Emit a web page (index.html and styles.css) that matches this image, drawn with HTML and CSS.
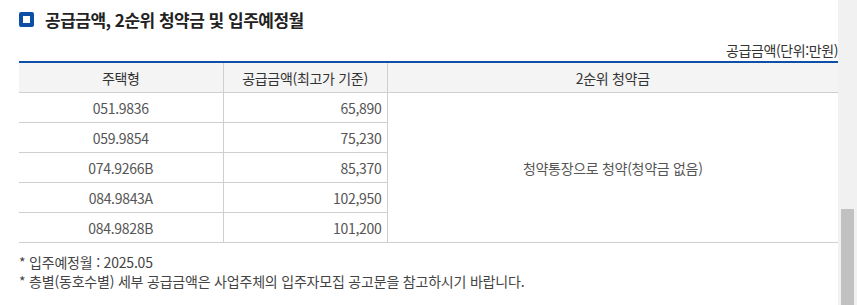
FILE: index.html
```html
<!DOCTYPE html>
<html lang="ko">
<head>
<meta charset="utf-8">
<link rel="stylesheet" href="styles.css">
</head>
<body>
<div class="frame">
  <main class="content">
    <h3 class="title"><span class="bullet"></span>공급금액, 2순위 청약금 및 입주예정월</h3>
    <p class="unit">공급금액(단위:만원)</p>
    <table class="supply">
      <colgroup>
        <col class="c1"><col class="c2"><col class="c3">
      </colgroup>
      <thead>
        <tr><th>주택형</th><th>공급금액(최고가 기준)</th><th>2순위 청약금</th></tr>
      </thead>
      <tbody>
        <tr><td>051.9836</td><td class="num">65,890</td><td class="merged" rowspan="5">청약통장으로 청약(청약금 없음)</td></tr>
        <tr><td>059.9854</td><td class="num">75,230</td></tr>
        <tr><td>074.9266B</td><td class="num">85,370</td></tr>
        <tr><td>084.9843A</td><td class="num">102,950</td></tr>
        <tr><td>084.9828B</td><td class="num">101,200</td></tr>
      </tbody>
    </table>
    <ul class="notes">
      <li>* 입주예정월 : 2025.05</li>
      <li>* 층별(동호수별) 세부 공급금액은 사업주체의 입주자모집 공고문을 참고하시기 바랍니다.</li>
    </ul>
  </main>
  <div class="scrollbar"><div class="thumb"></div></div>
</div>
</body>
</html>
```
FILE: styles.css
```css
html, body {
  margin: 0;
  padding: 0;
  background: #fff;
}
body {
  font-family: "Noto Sans CJK KR", "Noto Sans", sans-serif;
  color: #333;
  overflow: hidden;
}
.frame {
  display: flex;
  width: 857px;
  height: 305px;
}
.content {
  flex: 1;
  padding-left: 19px;
  min-width: 0;
}
.title {
  margin: 0;
  padding-top: 7px;
  height: 24px;
  display: flex;
  align-items: center;
  gap: 11px;
  font-size: 17px;
  font-weight: 700;
  color: #222;
  letter-spacing: -0.5px;
}
.bullet {
  width: 7px;
  height: 7px;
  border: 4px solid #0d4ea6;
  border-radius: 2px;
  background: #fff;
  flex: none;
}
.unit {
  margin: 9px 0 0;
  height: 21px;
  line-height: 20px;
  text-align: right;
  font-size: 14px;
  letter-spacing: -0.4px;
  color: #333;
}
.supply {
  width: 819px;
  border-collapse: collapse;
  border-top: 2px solid #0d4ea6;
  font-size: 14px;
  letter-spacing: -0.3px;
}
.c1 { width: 204px; }
.c2 { width: 164px; }
.supply th {
  background: #f4f4f4;
  font-weight: 400;
  color: #333;
  height: 29px;
  padding: 0;
  border-bottom: 1px solid #cfcfcf;
  border-right: 1px solid #cfcfcf;
}
.supply td {
  height: 29px;
  padding: 0;
  text-align: center;
  color: #555;
  border-bottom: 1px solid #cfcfcf;
  border-right: 1px solid #cfcfcf;
}
.supply th:last-child,
.supply td.merged {
  border-right: none;
}
.supply td.num {
  text-align: right;
  padding-right: 5px;
}
.notes {
  list-style: none;
  margin: 10px 0 0;
  padding: 0;
  font-size: 14px;
  line-height: 19px;
  letter-spacing: -0.2px;
  color: #444;
}
.scrollbar {
  width: 19px;
  flex: none;
  background: #f1f1f1;
  display: flex;
  justify-content: center;
}
.thumb {
  width: 13px;
  margin-top: 209px;
  height: 96px;
  background: #c1c1c1;
}
```
